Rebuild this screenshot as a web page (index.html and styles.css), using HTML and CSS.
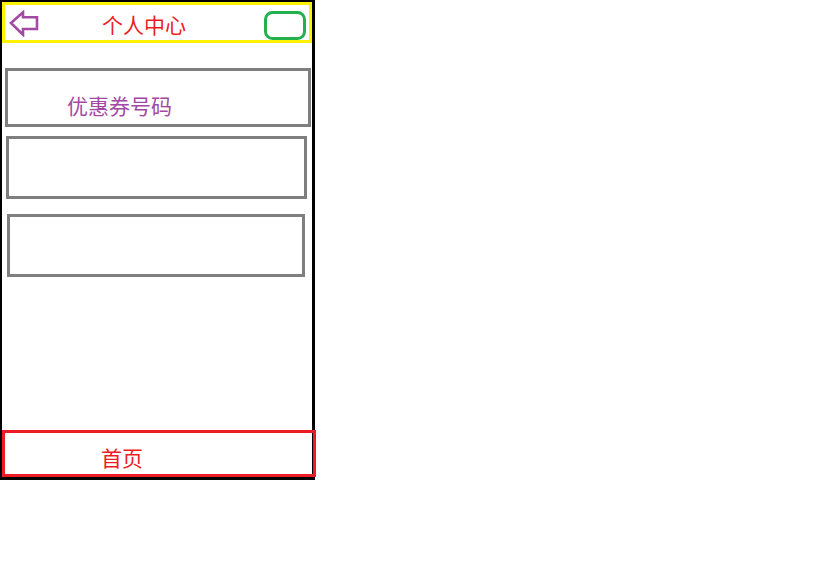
FILE: index.html
```html
<!DOCTYPE html>
<html lang="zh-CN">
<head>
<meta charset="utf-8">
<title>个人中心</title>
<link rel="stylesheet" href="styles.css">
</head>
<body>
<div class="phone">
  <header class="topbar">
    <svg class="back" width="31" height="27" viewBox="0 0 31 27" aria-hidden="true">
      <path d="M2 13 L14 2.3 L14 7.3 L28 7.3 L28 19 L14 19 L14 24.7 Z" fill="none" stroke="#a349a4" stroke-width="2.6" stroke-linejoin="miter"/>
    </svg>
    <span class="title">个人中心</span>
    <svg class="action" width="44" height="31" viewBox="0 0 44 31" aria-hidden="true">
      <rect x="2.5" y="2.5" width="39" height="26" rx="7" ry="7" fill="none" stroke="#22b14c" stroke-width="3"/>
    </svg>
  </header>
  <div class="field field-1"><span class="label">优惠券号码</span></div>
  <div class="field field-2"></div>
  <div class="field field-3"></div>
  <footer class="bottombar"><span class="home">首页</span></footer>
</div>
</body>
</html>
```
FILE: styles.css
```css
html, body {
  margin: 0;
  padding: 0;
  background: #ffffff;
}
body {
  font-family: "Noto Sans CJK SC", "Microsoft YaHei", sans-serif;
}
.phone {
  box-sizing: border-box;
  width: 315px;
  height: 480px;
  border-style: solid;
  border-color: #000000;
  border-width: 2px 3px 3px 2px;
  display: flex;
  flex-direction: column;
}
.topbar {
  box-sizing: border-box;
  flex-shrink: 0;
  width: 310px;
  height: 41px;
  border: 3px solid #fff200;
  display: flex;
  align-items: flex-start;
}
.back {
  display: block;
  margin-top: 5px;
  margin-left: 4px;
  flex-shrink: 0;
}
.title {
  margin-top: 9px;
  margin-left: 62px;
  font-size: 21px;
  line-height: 21px;
  color: #ed1c24;
  white-space: nowrap;
}
.action {
  display: block;
  margin-top: 5px;
  margin-left: auto;
  margin-right: 2px;
  flex-shrink: 0;
}
.field {
  box-sizing: border-box;
  flex-shrink: 0;
  border: 3px solid #7f7f7f;
}
.field-1 {
  margin-top: 25px;
  margin-left: 3px;
  width: 306px;
  height: 59px;
  padding-top: 24px;
  padding-left: 59px;
}
.field-2 {
  margin-top: 9px;
  margin-left: 4px;
  width: 301px;
  height: 63px;
}
.field-3 {
  margin-top: 15px;
  margin-left: 5px;
  width: 298px;
  height: 63px;
}
.label {
  display: block;
  font-size: 21px;
  line-height: 21px;
  color: #a349a4;
  white-space: nowrap;
}
.bottombar {
  box-sizing: border-box;
  flex-shrink: 0;
  margin-top: auto;
  width: 314px;
  height: 47px;
  border: 3px solid #ed1c24;
  padding-top: 14px;
  padding-left: 96px;
}
.home {
  display: block;
  font-size: 21px;
  line-height: 21px;
  color: #ed1c24;
  white-space: nowrap;
}
```
